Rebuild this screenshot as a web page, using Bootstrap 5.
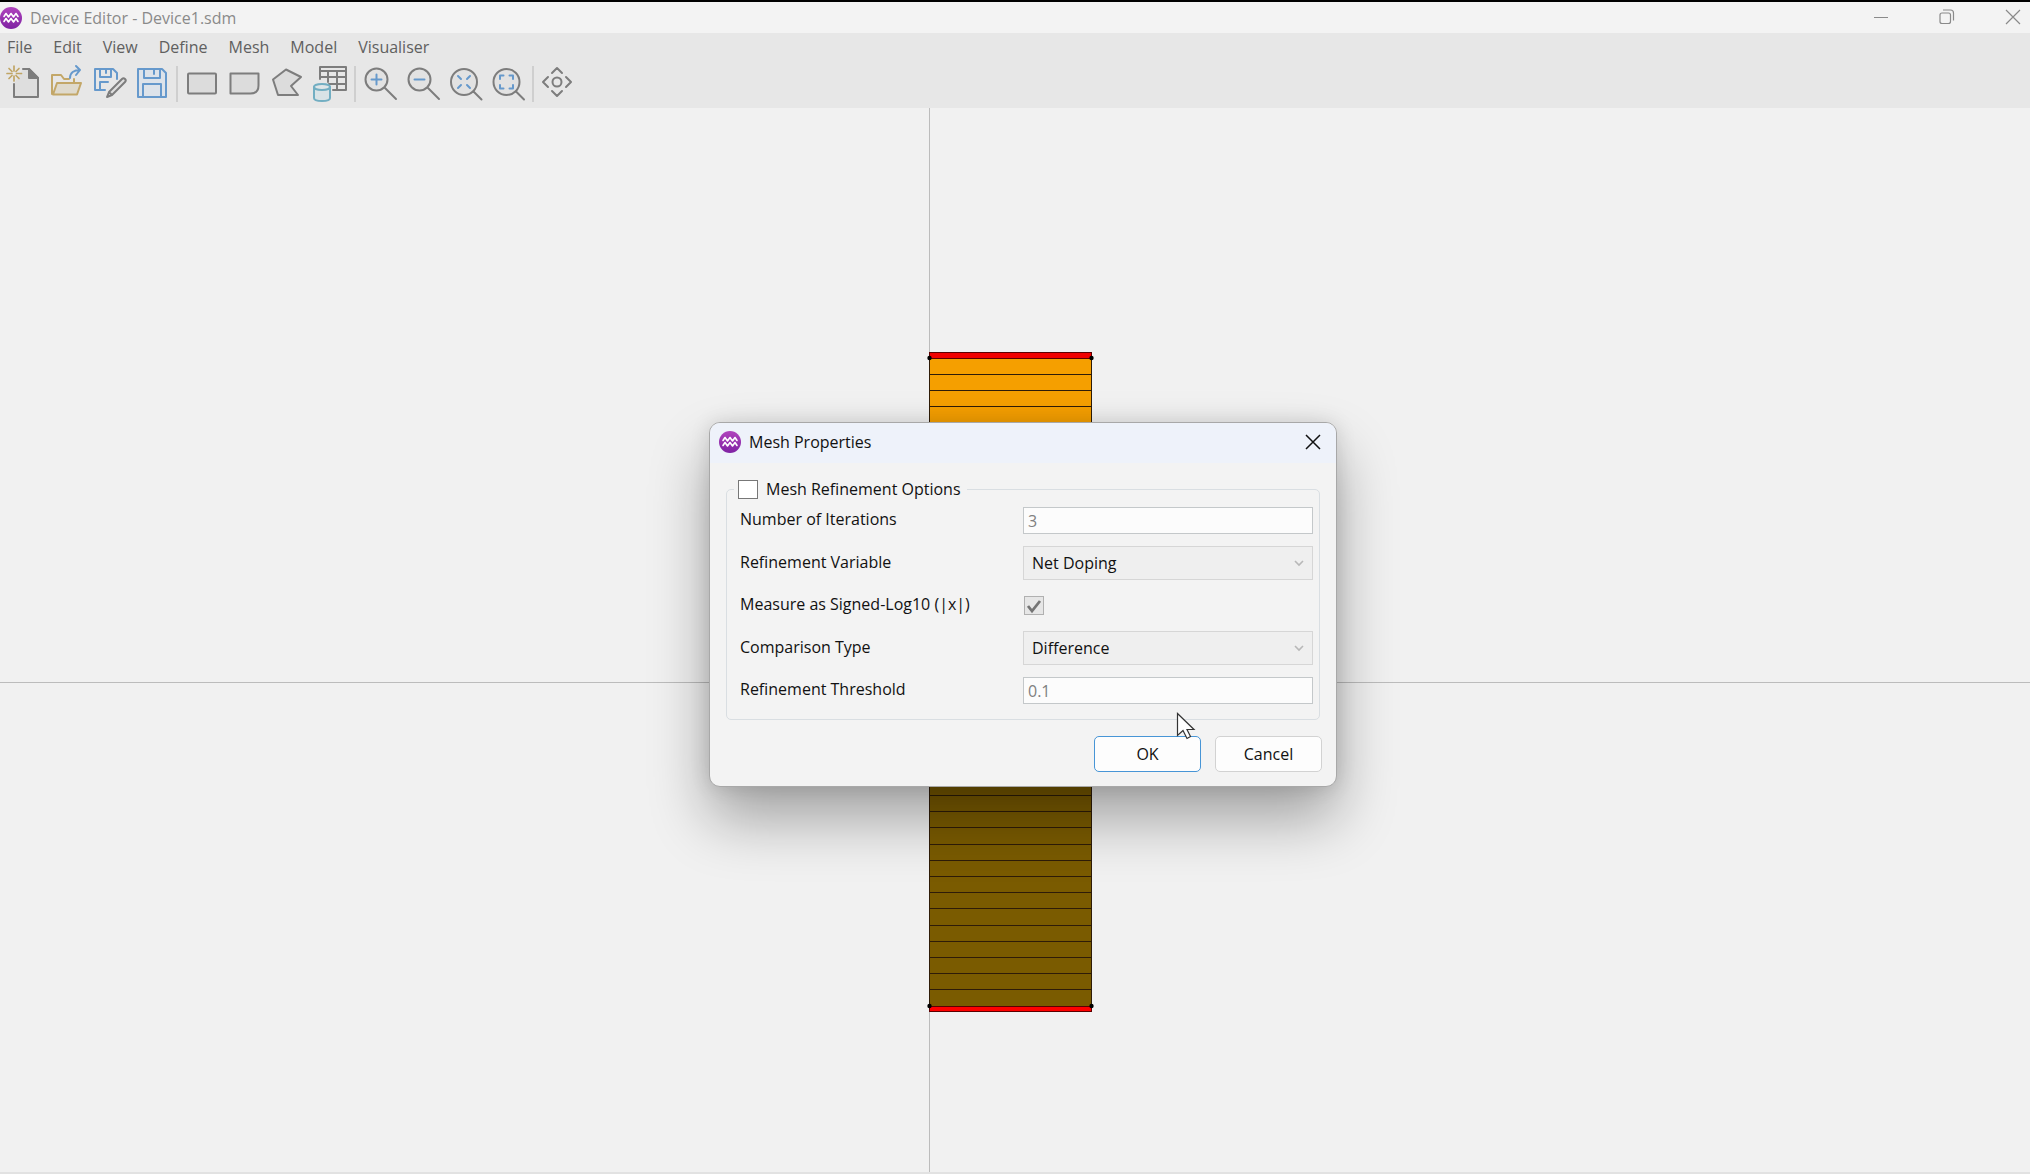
<!DOCTYPE html>
<html lang="en">
<head>
<meta charset="utf-8">
<meta name="viewport" content="width=device-width, initial-scale=1">
<title>Device Editor - Device1.sdm</title>
<link href="https://cdn.jsdelivr.net/npm/bootstrap@5.3.0/dist/css/bootstrap.min.css" rel="stylesheet">
<style>
  body { font-family: "Open Sans", "Noto Sans", sans-serif; font-size: 16px; line-height: 24px; background: #f1f1f1; color: #111; }
  svg { display: block; }
  .app-title { border-top: 2px solid #000; background: #f3f3f3; color: #8a8a8a; height: 33px; padding-right: 1px; }
  .app-title h1, .dlg-head h2 { font-size: 16px; line-height: 24px; font-weight: 400; margin: 0; }
  .bare { background: none; border: 0; padding: 0; color: inherit; }
  .win-controls { gap: 34px; }
  .app-bars { background: #e7e7e7; }
  .app-menu { gap: 21px; padding: 0 7px 2px; height: 29px; }
  .app-menu a { color: #606060; text-decoration: none; }
  .app-tools { padding: 0 2px 2px; color: #7d7d7d; }
  .app-tools svg { fill: none; stroke: currentColor; stroke-width: 2; stroke-linejoin: round; stroke-linecap: round; }
  .tool-sep { width: 2px; height: 36px; margin: 0 2px; background: #cfcfcf; }
  .canvas { border-bottom: 2px solid #e2e2e2; }
  .dlg { left: calc(50% - 306px); top: calc(50% - 218px); width: 628px; background: #f3f3f3; border: 1px solid #a8a8a8; border-radius: 11px; box-shadow: 0 32px 60px rgba(0,0,0,.33), 0 0 20px rgba(0,0,0,.12); }
  .dlg-head { background: #eef2fa; height: 40px; padding: 0 14px 2px 9px; border-radius: 10px 10px 0 0; }
  .dlg-main { padding: 14px 14px 14px 16px; }
  .opt-group { border: 1px solid #d9dee2; border-radius: 5px; padding: 6px 6px 15px 13px; margin-right: 2px; }
  .opt-group legend { font-size: 16px; line-height: 24px; padding: 0 6px 0 4px; margin-left: -6px; gap: 8px; }
  .opt-grid { display: grid; grid-template-columns: 283px 1fr; grid-template-rows: 27px 34px 27px 34px 27px; row-gap: 12px; align-items: center; }
  .opt-grid label { padding-bottom: 3px; }
  .opt-grid .form-control, .opt-grid .form-select { font-size: 16px; line-height: 24px; border-radius: 0; color: #111; height: 100%; min-height: 0; }
  .opt-grid .form-control:disabled { background-color: #fcfcfc; border: 1px solid #c4c8ca; color: #808080; padding: 1px 4px 0; }
  .opt-grid .form-select:disabled { background-color: #efefef; border: 1px solid #d6d6d6; padding: 0 30px 1px 8px; color: #111; opacity: 1;
    background-image: url("data:image/svg+xml,%3Csvg xmlns='http://www.w3.org/2000/svg' viewBox='0 0 10 8'%3E%3Cpath fill='none' stroke='%23b8b8b8' stroke-width='1.6' d='M1 2l4 4 4-4'/%3E%3C/svg%3E"); background-size: 10px 8px; background-position: right 8px center; }
  .tick.form-check-input { width: 20px; height: 19px; margin: 0; border: 1px solid #777; border-radius: 0; background-color: #fff; }
  .tick.form-check-input:disabled { opacity: 1; margin-left: 1px; border-color: #b0b0b0; background-color: #e6e6e6; background-size: 16px 16px;
    background-image: url("data:image/svg+xml,%3Csvg xmlns='http://www.w3.org/2000/svg' viewBox='0 0 16 16'%3E%3Cpath fill='none' stroke='%23747474' stroke-width='2.8' d='M2 8l4 5 8-10'/%3E%3C/svg%3E"); }
  .dlg-foot { gap: 14px; padding: 16px 0 0; }
  .dlg-btn.btn { width: 107px; height: 36px; padding: 0; font-size: 16px; line-height: 24px; background: #fdfdfd; border: 1px solid #d2d2d2; border-radius: 5px; color: #111; }
  .dlg-btn.is-default { border-color: #4795d6; }
  .pointer { left: 466px; top: 289px; }
</style>
</head>
<body class="d-flex flex-column vh-100 overflow-hidden">
<svg width="0" height="0" class="position-absolute" aria-hidden="true">
  <defs>
    <linearGradient id="purple" x1="0" y1="0" x2="0" y2="1"><stop offset="0" stop-color="#b044bd"/><stop offset="1" stop-color="#7f22a3"/></linearGradient>
    <symbol id="logo" viewBox="0 0 22 22">
      <circle cx="11" cy="11" r="11" fill="url(#purple)"/>
      <path d="M4 9.500l2-3 2.500 3.500L11 6.500l2.500 3.500L16 6.500l2 3M4 14.500l2-3 2.500 3.500 2.500-3.500 2.500 3.500 2.500-3.500 2 3" fill="none" stroke="#fff" stroke-width="1.600" stroke-linejoin="round" stroke-linecap="round"/>
    </symbol>
  </defs>
</svg>

<header class="app-title d-flex align-items-center justify-content-between flex-shrink-0">
  <div class="d-flex align-items-center gap-2">
    <svg width="22" height="22" aria-hidden="true"><use href="#logo"/></svg>
    <h1>Device Editor - Device1.sdm</h1>
  </div>
  <div class="win-controls d-flex">
    <button class="bare" type="button" aria-label="Minimise"><svg width="32" height="30"><path d="M9 14.500h14" stroke="#8a8a8a"/></svg></button>
    <button class="bare" type="button" aria-label="Restore"><svg width="32" height="30" fill="none" stroke="#8a8a8a" stroke-width="1.200"><rect x="9" y="10" width="10.500" height="10.500" rx="2"/><path d="M12 7h7.500a3 3 0 0 1 3 3v7.500"/></svg></button>
    <button class="bare" type="button" aria-label="Close window"><svg width="32" height="30"><path d="M9 7l14 14M23 7L9 21" stroke="#8a8a8a" stroke-width="1.200"/></svg></button>
  </div>
</header>

<div class="app-bars flex-shrink-0">
  <nav class="app-menu d-flex align-items-center">
    <a href="#">File</a><a href="#">Edit</a><a href="#">View</a><a href="#">Define</a><a href="#">Mesh</a><a href="#">Model</a><a href="#">Visualiser</a>
  </nav>
  <div class="app-tools d-flex align-items-center" role="toolbar" aria-label="Tools">
    <button class="bare" type="button" aria-label="New"><svg width="43" height="44"><path d="M12 22v13h24V16l-9-9h-6" fill="#dedede" stroke="none"/><path d="M12 22v13h24V16l-9-9h-6"/><path d="M27 7v9h9z" fill="currentColor"/><path d="M12 4v5M12 14v5M5 11.500h5M14.500 11.500h5M7 6.500l3 3M14 13.500l3 3M17 6.500l-3 3M10 13.500l-3 3" stroke="#c0a565" stroke-width="1.700"/></svg></button>
    <button class="bare" type="button" aria-label="Open"><svg width="43" height="44"><path d="M7 32V13h9l3 4h5M29 17v4" stroke="#c3a768"/><path d="M12 21h24l-4 11.500H8z" fill="#dfdacd" stroke="#c3a768"/><path d="M25 16c0-5 4-8 10-8M31 4l4 4-4 5" stroke="#6699cc"/></svg></button>
    <button class="bare" type="button" aria-label="Save as"><svg width="43" height="44"><path d="M7 7h18l4 4v6M17 28H7V7M12 7v8h11V7M18 8v3M12 28v-8h8" stroke="#6699cc"/><path d="M34 17c2-2 5 1 3 3L24 33l-5 2 2-5zM21 30l3 3" fill="#dedede"/></svg></button>
    <button class="bare" type="button" aria-label="Save"><svg width="43" height="44"><path d="M7 7h24l4 4v24H7z" fill="#dde3ea" stroke="#6699cc"/><path d="M13 7v9h16V7M23 8v4M12 35V22h18v13" stroke="#6699cc"/></svg></button>
    <span class="tool-sep"></span>
    <button class="bare" type="button" aria-label="Rectangle"><svg width="43" height="44"><rect x="8" y="11.500" width="28" height="20" rx="1" fill="#dcdcdc"/></svg></button>
    <button class="bare" type="button" aria-label="Rounded rectangle"><svg width="43" height="44"><path d="M7.500 11.500h28v12c0 5-3 8-8 8h-20z" fill="#dcdcdc"/></svg></button>
    <button class="bare" type="button" aria-label="Polygon"><svg width="43" height="44"><path d="M20 7.500L7 17.500l5 15.500h20l-7-9 10-9z" fill="#dcdcdc"/></svg></button>
    <button class="bare" type="button" aria-label="Material table"><svg width="43" height="44"><path d="M11 17V5h26v23H24M11 9h26M11 15h26M20 22h17M19 9v11M28 9v19"/><path d="M5 25v11c0 4 16 4 16 0V25z" fill="#d9e3e6" stroke="#72aec2"/><ellipse cx="13" cy="25" rx="8" ry="3" fill="#dfe6e8" stroke="#72aec2"/></svg></button>
    <span class="tool-sep"></span>
    <button class="bare" type="button" aria-label="Zoom in"><svg width="43" height="44"><circle cx="18.500" cy="17.500" r="11" fill="#e2e2e2"/><path d="M27 26l11 11"/><path d="M18.500 12.500v10M13.500 17.500h10" stroke="#6699cc"/></svg></button>
    <button class="bare" type="button" aria-label="Zoom out"><svg width="43" height="44"><circle cx="18.500" cy="17.500" r="11" fill="#e2e2e2"/><path d="M27 26l11 11"/><path d="M13.500 17.500h10" stroke="#6699cc"/></svg></button>
    <button class="bare" type="button" aria-label="Zoom to fit"><svg width="43" height="44"><circle cx="20" cy="20" r="13" fill="#e2e2e2"/><path d="M29.500 29.500l8 8"/><path d="M14 14l3 3M26 14l-3 3M14 26l3-3M26 26l-3-3" stroke="#6699cc"/></svg></button>
    <button class="bare" type="button" aria-label="Zoom to selection"><svg width="43" height="44"><circle cx="19.500" cy="20" r="13" fill="#e2e2e2"/><path d="M29 29.500l8 8"/><path d="M13 17v-3.500h3.500M22.500 13.500H26V17M26 23v3.500h-3.500M16.500 26.500H13V23" stroke="#6699cc"/></svg></button>
    <span class="tool-sep"></span>
    <button class="bare" type="button" aria-label="Pan"><svg width="43" height="44"><circle cx="21" cy="20" r="4.500"/><path d="M16 11l5-5 5 5M16 29l5 5 5-5M12 15l-5 5 5 5M30 15l5 5-5 5"/></svg></button>
  </div>
</div>

<main class="canvas position-relative flex-grow-1">
  <svg class="w-100 h-100 position-absolute" role="img" aria-label="Device cross-section">
    <svg x="50%" y="50%" overflow="visible">
      <path d="M-85.500-2000V2000M-3000 42.500H3000" stroke="#bcbcbc"/>
      <rect x="-85.500" y="-282" width="162" height="324" fill="#f59f00"/>
      <rect x="-85.500" y="42" width="162" height="324" fill="#7a5b00"/>
      <g id="layers" stroke="#2e1c08" stroke-width="1.200"></g>
      <path d="M-85.500-282V366M76.500-282V366" stroke="#2e1c08"/>
      <rect x="-85.500" y="-287.500" width="162" height="6" fill="#f00000" stroke="#5c0000"/>
      <rect x="-85.500" y="366.500" width="162" height="5" fill="#ff0000" stroke="#5c0000"/>
      <g fill="#000"><circle cx="-85.500" cy="-282" r="2.200"/><circle cx="76.500" cy="-282" r="2.200"/><circle cx="-85.500" cy="366" r="2.200"/><circle cx="76.500" cy="366" r="2.200"/></g>
    </svg>
  </svg>

  <section class="dlg position-absolute" role="dialog" aria-labelledby="dlgTitle">
    <div class="dlg-head d-flex align-items-center justify-content-between">
      <div class="d-flex align-items-center gap-2">
        <svg width="22" height="22" aria-hidden="true"><use href="#logo"/></svg>
        <h2 id="dlgTitle">Mesh Properties</h2>
      </div>
      <button class="bare" type="button" aria-label="Close"><svg width="18" height="18"><path d="M2 2l14 14M16 2L2 16" stroke="#111" stroke-width="1.500"/></svg></button>
    </div>
    <form class="dlg-main">
      <fieldset class="opt-group">
        <legend class="float-none w-auto mb-0 d-flex align-items-center">
          <input class="form-check-input tick" type="checkbox" id="refine"><label for="refine">Mesh Refinement Options</label>
        </legend>
        <div class="opt-grid">
          <label for="iters">Number of Iterations</label>
          <input class="form-control" id="iters" type="text" value="3" disabled>
          <label for="variable">Refinement Variable</label>
          <select class="form-select" id="variable" disabled><option>Net Doping</option></select>
          <label for="signed">Measure as Signed-Log10 (|x|)</label>
          <input class="form-check-input tick" id="signed" type="checkbox" checked disabled>
          <label for="compare">Comparison Type</label>
          <select class="form-select" id="compare" disabled><option>Difference</option></select>
          <label for="threshold">Refinement Threshold</label>
          <input class="form-control" id="threshold" type="text" value="0.1" disabled>
        </div>
      </fieldset>
      <div class="dlg-foot d-flex justify-content-end">
        <button class="btn dlg-btn is-default" type="button">OK</button>
        <button class="btn dlg-btn" type="button">Cancel</button>
      </div>
    </form>
    <svg class="pointer position-absolute" width="20" height="28" aria-hidden="true"><path d="M1.500 1.500v22l5.500-5 4 8 3.500-2-3.500-7h7z" fill="#fff" stroke="#333" stroke-width="1.200"/></svg>
  </section>
</main>

<script src="https://cdn.jsdelivr.net/npm/bootstrap@5.3.0/dist/js/bootstrap.bundle.min.js"></script>
<script>
  // 40 equal mesh layers across the device height
  const layers = document.getElementById('layers');
  for (let i = 1; i < 40; i++) {
    const y = Math.round(-282.5 + i * 16.2) + 0.5;
    const line = document.createElementNS('http://www.w3.org/2000/svg', 'path');
    line.setAttribute('d', `M-85.5 ${y}H76.5`);
    layers.appendChild(line);
  }
</script>
</body>
</html>
